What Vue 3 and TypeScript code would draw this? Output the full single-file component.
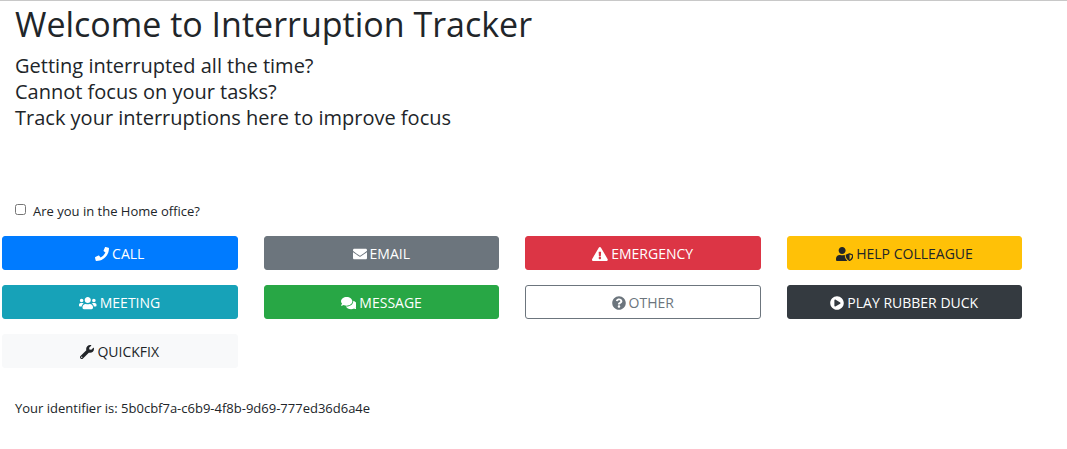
<script setup lang="ts">
import { ref } from 'vue'

interface Interruption {
  label: string
  variant: string
  width: number
  path: string
}

const homeOffice = ref(false)
const identifier = '5b0cbf7a-c6b9-4f8b-9d69-777ed36d6a4e'

const interruptions: Interruption[] = [
  {
    label: 'CALL',
    variant: 'primary',
    width: 512,
    path: 'M493.4 24.6l-104-24c-11.3-2.6-22.9 3.3-27.5 13.9l-48 112c-4.2 9.8-1.4 21.3 6.9 28l60.6 49.6c-36 76.7-98.9 140.5-177.2 177.2l-49.6-60.6c-6.8-8.3-18.2-11.1-28-6.9l-112 48C3.9 366.5-2 378.1.6 389.4l24 104C27.1 504.2 36.7 512 48 512c256.1 0 464-207.5 464-464 0-11.2-7.7-20.9-18.6-23.4z',
  },
  {
    label: 'EMAIL',
    variant: 'secondary',
    width: 512,
    path: 'M502.3 190.8c3.9-3.1 9.7-.2 9.7 4.7V400c0 26.5-21.5 48-48 48H48c-26.5 0-48-21.5-48-48V195.6c0-5 5.7-7.8 9.7-4.7 22.4 17.4 52.1 39.5 154.1 113.6 21.1 15.4 56.7 47.8 92.2 47.6 35.7.3 72-32.8 92.3-47.6 102-74.1 131.6-96.3 154-113.7zM256 320c23.2.4 56.6-29.2 73.4-41.4 132.7-96.3 142.8-104.7 173.4-128.7 5.8-4.5 9.2-11.5 9.2-18.9v-19c0-26.5-21.5-48-48-48H48c-26.5 0-48 21.5-48 48v19c0 7.4 3.4 14.3 9.2 18.9 30.6 23.9 40.7 32.4 173.4 128.7 16.8 12.2 50.2 41.8 73.4 41.4z',
  },
  {
    label: 'EMERGENCY',
    variant: 'danger',
    width: 576,
    path: 'M569.517 440.013C587.975 472.007 564.806 512 527.94 512H48.054c-36.937 0-59.999-40.055-41.577-71.987L246.423 23.985c18.467-32.009 64.72-31.951 83.154 0l239.94 416.028zM288 354c-25.405 0-46 20.595-46 46s20.595 46 46 46 46-20.595 46-46-20.595-46-46-46zm-43.673-165.346l7.418 136c.347 6.364 5.609 11.346 11.982 11.346h48.546c6.373 0 11.635-4.982 11.982-11.346l7.418-136c.375-6.874-5.098-12.654-11.982-12.654h-63.383c-6.884 0-12.356 5.78-11.981 12.654z',
  },
  {
    label: 'HELP COLLEAGUE',
    variant: 'warning',
    width: 640,
    path: 'M622.3 271.1l-115.2-45c-4.1-1.6-12.6-3.7-22.2 0l-115.2 45c-10.7 4.2-17.7 14-17.7 24.9 0 111.6 68.7 188.8 132.9 213.9 9.6 3.7 18 1.6 22.2 0C558.4 489.9 640 420.5 640 296c0-10.9-7-20.7-17.7-24.9zM496 462.4V273.3l95.5 37.3c-5.6 87.1-60.9 135.4-95.5 151.8zM224 256c70.7 0 128-57.3 128-128S294.7 0 224 0 96 57.3 96 128s57.3 128 128 128zm96 40c0-2.5.8-4.8 1.1-7.2-2.5-.1-4.9-.8-7.5-.8h-16.7c-22.2 10.2-46.9 16-72.9 16s-50.6-5.8-72.9-16h-16.7C60.2 288 0 348.2 0 422.4V464c0 26.5 21.5 48 48 48h352c6.8 0 13.3-1.5 19.2-4-54-42.9-99.2-116.7-99.2-212z',
  },
  {
    label: 'MEETING',
    variant: 'info',
    width: 640,
    path: 'M96 224c35.3 0 64-28.7 64-64s-28.7-64-64-64-64 28.7-64 64 28.7 64 64 64zm448 0c35.3 0 64-28.7 64-64s-28.7-64-64-64-64 28.7-64 64 28.7 64 64 64zm32 32h-64c-17.6 0-33.5 7.1-45.1 18.6 40.3 22.1 68.9 62 75.1 109.4h66c17.7 0 32-14.3 32-32v-32c0-35.3-28.7-64-64-64zm-256 0c61.9 0 112-50.1 112-112S381.9 32 320 32 208 82.1 208 144s50.1 112 112 112zm76.8 32h-8.3c-20.8 10-43.9 16-68.5 16s-47.6-6-68.5-16h-8.3C179.6 288 128 339.6 128 403.2V432c0 26.5 21.5 48 48 48h288c26.5 0 48-21.5 48-48v-28.8c0-63.6-51.6-115.2-115.2-115.2zm-223.7-13.4C161.5 263.1 145.6 256 128 256H64c-35.3 0-64 28.7-64 64v32c0 17.7 14.3 32 32 32h65.9c6.3-47.4 34.9-87.3 75.2-109.4z',
  },
  {
    label: 'MESSAGE',
    variant: 'success',
    width: 576,
    path: 'M416 192c0-88.4-93.1-160-208-160S0 103.6 0 192c0 34.3 14.1 65.9 38 92-13.4 30.2-35.5 54.2-35.8 54.5-2.2 2.3-2.8 5.7-1.5 8.7S4.8 352 8 352c36.6 0 66.9-12.3 88.7-25 32.2 15.7 70.3 25 111.3 25 114.9 0 208-71.6 208-160zm122 220c23.9-26 38-57.7 38-92 0-66.9-53.5-124.2-129.3-148.1.9 6.6 1.3 13.3 1.3 20.1 0 105.9-107.7 192-240 192-10.8 0-21.3-.8-31.7-1.9C207.8 439.6 281.8 480 368 480c41 0 79.1-9.2 111.3-25 21.8 12.7 52.1 25 88.7 25 3.2 0 6.1-1.9 7.3-4.8 1.3-2.9.7-6.3-1.5-8.7-.3-.3-22.4-24.2-35.8-54.5z',
  },
  {
    label: 'OTHER',
    variant: 'outline',
    width: 512,
    path: 'M504 256c0 136.997-111.043 248-248 248S8 392.997 8 256C8 119.083 119.043 8 256 8s248 111.083 248 248zM262.655 90c-54.497 0-89.255 22.957-116.549 63.758-3.536 5.286-2.353 12.415 2.715 16.258l34.699 26.31c5.205 3.947 12.621 3.008 16.665-2.122 17.864-22.658 30.113-35.797 57.303-35.797 20.429 0 45.698 13.148 45.698 32.958 0 14.976-12.363 22.667-32.534 33.976C247.128 238.528 216 254.941 216 296v4c0 6.627 5.373 12 12 12h56c6.627 0 12-5.373 12-12v-1.333c0-28.462 83.186-29.647 83.186-106.667 0-58.002-60.165-102-116.531-102zM256 338c-25.365 0-46 20.635-46 46 0 25.364 20.635 46 46 46s46-20.636 46-46c0-25.365-20.635-46-46-46z',
  },
  {
    label: 'PLAY RUBBER DUCK',
    variant: 'dark',
    width: 512,
    path: 'M256 8C119 8 8 119 8 256s111 248 248 248 248-111 248-248S393 8 256 8zm115.7 272l-176 101c-15.8 8.8-35.7-2.5-35.7-21V152c0-18.4 19.8-29.8 35.7-21l176 107c16.4 9.2 16.4 32.9 0 42z',
  },
  {
    label: 'QUICKFIX',
    variant: 'light',
    width: 512,
    path: 'M507.73 109.1c-2.24-9.03-13.54-12.09-20.12-5.51l-74.36 74.36-67.88-11.31-11.31-67.88 74.36-74.36c6.62-6.62 3.43-17.9-5.66-20.16-47.38-11.74-99.55.91-136.58 37.93-39.64 39.64-50.55 97.1-34.05 147.2L18.74 402.76c-24.99 24.99-24.99 65.51 0 90.5 24.99 24.99 65.51 24.99 90.5 0l213.21-213.21c50.12 16.71 107.47 5.68 147.37-34.22 37.07-37.07 49.7-89.32 37.91-136.73zM64 472c-13.25 0-24-10.75-24-24 0-13.26 10.75-24 24-24s24 10.74 24 24c0 13.25-10.75 24-24 24z',
  },
]
</script>

<template>
  <main class="page">
    <header class="intro">
      <h1>Welcome to Interruption Tracker</h1>
      <p class="lead">
        Getting interrupted all the time?<br />
        Cannot focus on your tasks?<br />
        Track your interruptions here to improve focus
      </p>
    </header>

    <div class="office">
      <input id="home-office" v-model="homeOffice" type="checkbox" />
      <label for="home-office">Are you in the Home office?</label>
    </div>

    <div class="actions">
      <button v-for="item in interruptions" :key="item.label" type="button" class="btn" :class="item.variant">
        <svg class="icon" :viewBox="`0 0 ${item.width} 512`" aria-hidden="true">
          <path :d="item.path" fill="currentColor" />
        </svg>
        <span>{{ item.label }}</span>
      </button>
    </div>

    <p class="identifier">Your identifier is: {{ identifier }}</p>
  </main>
</template>

<style>
body {
  margin: 0;
  background: #fff;
}
</style>

<style scoped>
.page {
  border-top: 1px solid #c8c8c8;
  color: #212529;
  font-family: 'Open Sans', 'Noto Sans', sans-serif;
  font-size: 14px;
  line-height: 20px;
}

.intro {
  padding: 2px 15px 0;
}

h1 {
  margin: 0 0 8px;
  font-size: 34px;
  font-weight: 400;
  line-height: 42px;
}

.lead {
  margin: 0;
  font-size: 20px;
  line-height: 26px;
}

.office {
  display: flex;
  align-items: center;
  gap: 7px;
  margin-top: 70px;
  padding: 0 15px;
  font-size: 13px;
}

.office input {
  width: 11px;
  height: 11px;
  margin: 0 0 3px;
}

.actions {
  display: grid;
  grid-template-columns: repeat(4, minmax(0, 1fr));
  gap: 15px 26px;
  margin: 15px 45px 0 2px;
}

.btn {
  display: flex;
  align-items: center;
  justify-content: center;
  gap: 3px;
  height: 34px;
  padding: 2px 10px 0;
  border: 1px solid transparent;
  border-radius: 3px;
  color: #fff;
  font: inherit;
  cursor: pointer;
}

.icon {
  flex: none;
  height: 14px;
}

.primary {
  border-color: #007bff;
  background: #007bff;
}

.secondary {
  border-color: #6c757d;
  background: #6c757d;
}

.danger {
  border-color: #dc3545;
  background: #dc3545;
}

.warning {
  border-color: #ffc107;
  background: #ffc107;
  color: #212529;
}

.info {
  border-color: #17a2b8;
  background: #17a2b8;
}

.success {
  border-color: #28a745;
  background: #28a745;
}

.outline {
  border-color: #6c757d;
  background: #fff;
  color: #6c757d;
}

.dark {
  border-color: #343a40;
  background: #343a40;
}

.light {
  border-color: #f8f9fa;
  background: #f8f9fa;
  color: #212529;
}

.identifier {
  margin: 30px 15px 0;
  font-size: 13px;
}
</style>
